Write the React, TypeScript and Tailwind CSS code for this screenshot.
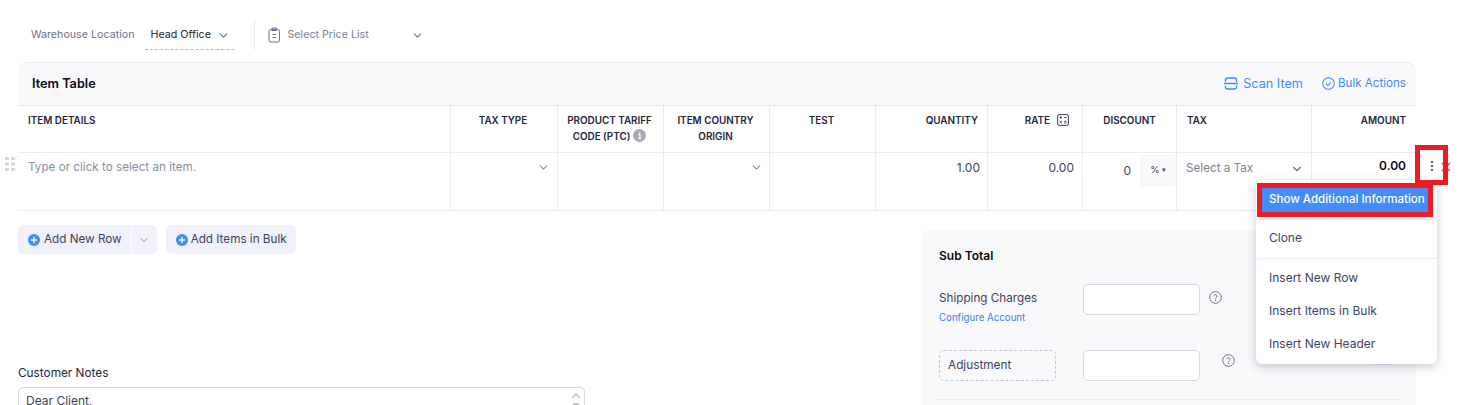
import React from 'react';
import { ChevronDown } from 'lucide-react';

const Chevron = ({ className }: { className: string }) => (
  <ChevronDown className={className} strokeWidth={2} />
);

const PlusCircle = () => (
  <svg width="12" height="12" viewBox="0 0 12 12" className="shrink-0">
    <circle cx="6" cy="6" r="6" fill="#408dfb" />
    <path d="M6 3v6M3 6h6" stroke="#fff" strokeWidth="1.4" />
  </svg>
);

const Help = () => (
  <svg width="13" height="13" viewBox="0 0 13 13" fill="none" className="shrink-0">
    <circle cx="6.5" cy="6.5" r="5.8" stroke="#6c718a" strokeWidth="1" />
    <path d="M4.9 5.2c0-2.1 3.2-2.1 3.2-.1 0 1.2-1.6 1.2-1.6 2.5" stroke="#6c718a" strokeWidth="1" />
    <circle cx="6.5" cy="9.4" r=".7" fill="#6c718a" />
  </svg>
);

const columns = [
  { label: 'ITEM DETAILS', align: 'text-left pl-[10px]' },
  { label: 'TAX TYPE', align: 'text-center pr-[2px]' },
  { label: 'PRODUCT TARIFF', second: 'CODE (PTC)', info: true, align: 'text-center pr-[2px]' },
  { label: 'ITEM COUNTRY', second: 'ORIGIN', align: 'text-center pr-[2px]' },
  { label: 'TEST', align: 'text-center pr-[2px]' },
  { label: 'QUANTITY', align: 'text-right pr-[9px]' },
  { label: 'RATE', calc: true, align: 'text-right pr-[13px]' },
  { label: 'DISCOUNT', align: 'text-center' },
  { label: 'TAX', align: 'text-left pl-[10px]' },
  { label: 'AMOUNT', align: 'text-right pr-[10px]' },
];

const gridCols = 'grid grid-cols-[433px_107px_106px_106px_106px_112px_95px_94px_135px_104px]';

const ItemTable = () => (
  <div className="mt-[12px] w-[1398px]">
    <div className="flex h-[44px] items-center justify-between rounded-t-[10px] border-t border-[#ebeaf2] bg-[#f9f9fb] pl-[14px] pr-[10px] border-b">
      <span className="text-[12.7px] font-semibold text-[#0b0b14]">Item Table</span>
      <div className="flex items-center text-[12.7px] text-[#408dfb]">
        <span className="flex items-center gap-[5px]">
          <svg width="14" height="13" viewBox="0 0 14 13" fill="none" stroke="#408dfb" strokeWidth="1.4">
            <path d="M1.5 5V3a2 2 0 0 1 2-2h7a2 2 0 0 1 2 2v2M0 6.5h14M1.5 8.5V10a2 2 0 0 0 2 2h7a2 2 0 0 0 2-2V8.5" />
          </svg>
          Scan Item
        </span>
        <span className="ml-[19px] flex items-center gap-[3px] text-[11.6px]">
          <svg width="13" height="13" viewBox="0 0 13 13" fill="none" stroke="#408dfb" strokeWidth="1.1">
            <circle cx="6.5" cy="6.5" r="5.8" />
            <path d="M4 6.6l1.9 1.9 3.2-3.6" />
          </svg>
          Bulk Actions
        </span>
      </div>
    </div>
    <div className={`${gridCols} h-[47px] border-b border-[#ebeaf2]`}>
      {columns.map((c, i) => (
        <div
          key={c.label}
          className={`${c.align} ${i < 9 ? 'border-r border-[#ebeaf2]' : ''} pt-[6px] text-[9.9px] font-semibold leading-[16px] text-[#21263c]`}
        >
          <div>
            {c.label}
            {c.calc && (
              <svg width="12" height="12" viewBox="0 0 12 12" fill="none" className="ml-[7px] inline-block align-[-2px]">
                <rect x=".6" y=".6" width="10.8" height="10.8" rx="1.5" stroke="#3a3a48" />
                <path d="M2.5 3.5h2.5M3.75 2.2v2.6M7.2 3.5h2.4M2.6 7l2.2 2.2M4.8 7 2.6 9.2M7.2 7.3h2.4M7.2 9h2.4" stroke="#3a3a48" strokeWidth=".9" />
              </svg>
            )}
          </div>
          {c.second && (
            <div>
              {c.second}
              {c.info && (
                <svg width="13" height="13" viewBox="0 0 13 13" className="ml-[3px] inline-block align-[-2px]">
                  <circle cx="6.5" cy="6.5" r="6.5" fill="#a9a9b8" />
                  <path d="M5.4 5.6h1.5v3.6M5.2 9.4h3M6.6 3.2v1.3" stroke="#fff" strokeWidth="1.2" fill="none" />
                </svg>
              )}
            </div>
          )}
        </div>
      ))}
    </div>
    <div className={`${gridCols} relative h-[58px] border-b border-[#ebeaf2] text-[11.7px]`}>
      <div className="border-r border-[#ebeaf2] pl-[10px] pt-[6px] text-[#8a8da3]">Type or click to select an item.</div>
      <div className="flex justify-end border-r border-[#ebeaf2] pr-[7px] pt-[8px]">
        <Chevron className="h-[13px] w-[13px] text-[#8b8d9e]" />
      </div>
      <div className="border-r border-[#ebeaf2]" />
      <div className="flex justify-end border-r border-[#ebeaf2] pr-[6px] pt-[8px]">
        <Chevron className="h-[13px] w-[13px] text-[#8b8d9e]" />
      </div>
      <div className="border-r border-[#ebeaf2]" />
      <div className="border-r border-[#ebeaf2] pr-[7px] pt-[6px] text-right text-[12px] text-[#3f4358]">1.00</div>
      <div className="border-r border-[#ebeaf2] pr-[8px] pt-[6px] text-right text-[12px] text-[#3f4358]">0.00</div>
      <div className="flex justify-end border-r border-[#ebeaf2]">
        <span className="pr-[10px] pt-[9px] text-[12px] text-[#3f4358]">0</span>
        <span className="mr-px mt-[2px] flex h-[31px] w-[34px] items-center justify-center gap-[2px] border border-[#f3f3f7] bg-[#fafafc] text-[9.5px] text-[#3f4358]">
          %<span className="text-[7px]">▾</span>
        </span>
      </div>
      <div className="flex justify-between border-r border-[#ebeaf2] pl-[9px] pr-[7px] pt-[7px] text-[#7e8196]">
        Select a Tax
        <Chevron className="mt-[2px] h-[14px] w-[14px] text-[#6c718a]" />
      </div>
      <div className="pr-[10px] pt-[5px] text-right text-[12px] font-semibold leading-[15px] text-[#0b0b14]">0.00</div>
    </div>
  </div>
);

const Summary = () => (
  <div className="relative mt-[5px] h-[200px] w-[495px] rounded-tl-[10px] bg-[#f9f9fb] pl-[18px] pt-[18px]">
    <div className="text-[12px] font-semibold leading-[16px] text-[#0b0b14]">Sub Total</div>
    <div className="mt-[20px] flex items-start">
      <div className="w-[144px]">
        <div className="pt-[6px] text-[11.7px] leading-[16px] text-[#3f4358]">Shipping Charges</div>
        <div className="mt-[6px] text-[9.7px] leading-[12px] text-[#3f7fee]">Configure Account</div>
      </div>
      <div className="h-[31px] w-[117px] rounded-[5px] border border-[#d8d7e3] bg-white" />
      <div className="ml-[9px] pt-[7px]"><Help /></div>
    </div>
    <div className="mt-[26px] flex items-start">
      <div className="mr-[27px] flex h-[31px] w-[117px] items-center rounded-[5px] border border-dashed border-[#c4c3d0] pl-[8px] text-[11.8px] text-[#3f4358]">
        Adjustment
      </div>
      <div className="h-[31px] w-[117px] rounded-[5px] border border-[#d8d7e3] bg-white" />
      <div className="ml-[22px] pt-[4px]"><Help /></div>
    </div>
    <div className="ml-[-4px] mt-[18px] mr-[14px] border-t border-[#ebeaf2]" />
  </div>
);

const Menu = () => (
  <div className="absolute left-[1256px] top-[180px] z-10 h-[184px] w-[181px] rounded-[6px] bg-white text-[12px] text-[#404462] shadow-[0_3px_10px_rgba(60,60,100,0.28)]">
    <div className="mx-[5px] mt-[8px] flex h-[24px] items-center bg-[#408dfb] pl-[8px] text-[11.55px] font-medium text-white">
      Show Additional Information
    </div>
    <div className="mt-[7px] border-t border-[#ebeaf2]" />
    <div className="flex h-[38px] items-center pb-[2px] pl-[13px]">Clone</div>
    <div className="border-t border-[#ebeaf2]" />
    <div className="flex h-[37px] items-center pl-[13px]">Insert New Row</div>
    <div className="flex h-[29px] items-center pl-[13px]">Insert Items in Bulk</div>
    <div className="flex h-[37px] items-center pl-[13px]">Insert New Header</div>
  </div>
);

export default function App() {
  return (
    <div
      className="relative h-[405px] w-[1472px] overflow-hidden bg-white pl-[18px]"
      style={{ fontFamily: 'Inter, "Noto Sans", sans-serif' }}
    >
      <div className="flex h-[50px] items-end pl-[13px] pt-[18px] text-[10.7px]">
        <div className="flex h-[32px] items-center pt-[2px] text-[#6c718a]">Warehouse Location</div>
        <div className="ml-[11px] flex h-[32px] w-[89px] items-center border-b border-dashed border-[#b5b5c3] pl-[5px] pt-[3px] text-[#21263c]">
          Head Office
          <Chevron className="ml-[6px] h-[13px] w-[13px] text-[#6c718a]" />
        </div>
        <div className="ml-[20px] h-[31px] border-l border-[#ebeaf2]" />
        <div className="flex h-[32px] items-center pl-[13px] pt-[2px] text-[#7e8196]">
          <svg width="13" height="16" viewBox="0 0 13 16" fill="none" stroke="#6c718a" strokeWidth="1">
            <rect x="1" y="2.5" width="10.5" height="12.5" rx="1.8" />
            <path d="M4 1h4.5v2.5H4zM4.5 7.5h3.5M4.5 10.5h3.5" />
          </svg>
          <span className="ml-[6px] w-[124px]">Select Price List</span>
          <Chevron className="h-[13px] w-[13px] text-[#6c718a]" />
        </div>
      </div>

      <ItemTable />

      <div className="mt-[14px] flex w-[1398px] items-start justify-between">
        <div className="w-[567px]">
          <div className="flex text-[11.7px] text-[#3f4358]">
            <div className="flex h-[29px] items-center gap-[4px] rounded-l-[5px] bg-[#f0f1fa] pl-[10px] pr-[9px]">
              <PlusCircle />
              Add New Row
            </div>
            <div className="flex h-[29px] w-[26px] items-center justify-center rounded-r-[5px] border-l border-white bg-[#f0f1fa]">
              <Chevron className="h-[12px] w-[12px] text-[#8b8d9e]" />
            </div>
            <div className="ml-[9px] flex h-[29px] items-center gap-[3px] rounded-[5px] bg-[#f0f1fa] pl-[10px] pr-[9px]">
              <PlusCircle />
              Add Items in Bulk
            </div>
          </div>
          <div className="mt-[111px] text-[11.8px] leading-[16px] text-[#21263c]">Customer Notes</div>
          <div className="relative mt-[6px] h-[40px] rounded-[5px] border border-[#d8d7e3] pl-[7px] pt-[5px] text-[12px] leading-[16px] text-[#3f4358]">
            Dear Client,
            <svg width="10" height="14" viewBox="0 0 10 14" fill="none" stroke="#b5b5c3" strokeWidth="1.4" className="absolute right-[3px] top-[3px]">
              <path d="M1.5 6.5 5 3l3.5 3.5M2 13h6" />
            </svg>
          </div>
        </div>
        <Summary />
      </div>

      {/* row actions, these sit over the table edge */}
      <svg width="12" height="16" viewBox="0 0 12 16" fill="#d6d6de" className="absolute left-[4px] top-[156px]">
        <rect x="1" y="1" width="4" height="3" /><rect x="7" y="1" width="4" height="3" />
        <rect x="1" y="6.5" width="4" height="3" /><rect x="7" y="6.5" width="4" height="3" />
        <rect x="1" y="12" width="4" height="3" /><rect x="7" y="12" width="4" height="3" />
      </svg>
      <svg width="4" height="12" viewBox="0 0 4 12" fill="#6d6d60" className="absolute left-[1430px] top-[160px]">
        <circle cx="2" cy="2" r="1.3" /><circle cx="2" cy="6" r="1.3" /><circle cx="2" cy="10" r="1.3" />
      </svg>
      <svg width="10" height="10" viewBox="0 0 10 10" fill="none" stroke="#ef4a4a" strokeWidth="1.6" className="absolute left-[1441px] top-[162px]">
        <path d="M1 1l8 8M9 1l-8 8" />
      </svg>

      <Menu />
      <div className="absolute left-[1372px] top-[364px] w-[21px] border-t border-dotted border-[#d8d7e3]" />

      {/* red annotation boxes */}
      <div className="absolute left-[1415px] top-[145px] z-20 h-[40px] w-[33px] border-[5px] border-[#ed1c24]" />
      <div className="absolute left-[1257px] top-[183px] z-20 h-[34px] w-[176px] border-[5px] border-[#ed1c24]" />
    </div>
  );
}
